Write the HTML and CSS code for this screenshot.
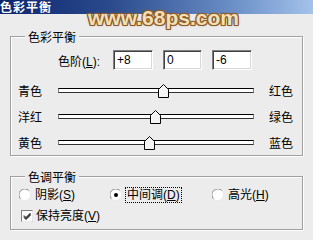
FILE: index.html
```html
<!DOCTYPE html>
<html lang="zh">
<head>
<meta charset="utf-8">
<title>色彩平衡</title>
<link rel="stylesheet" href="styles.css">
</head>
<body>
<div class="dialog">
  <div class="titlebar"><span class="title">色彩平衡</span></div>
  <div class="watermark">www.68ps.com</div>
  <div class="content">
    <fieldset class="group group-balance">
      <legend>色彩平衡</legend>
      <div class="levels">
        <span class="levels-label">色阶(<u>L</u>):</span>
        <div class="field">+8</div>
        <div class="field field-mid">0</div>
        <div class="field">-6</div>
      </div>
      <div class="slider-row">
        <span class="side-label">青色</span>
        <div class="track"><svg class="thumb" style="--v:8" width="11" height="14" viewBox="0 0 11 14"><polygon points="0.5,5.5 5.5,0.5 10.5,5.5 10.5,13.5 0.5,13.5" fill="#f4f4f4" stroke="#000"/><polyline points="1.5,12.5 1.5,5.9 5.5,1.9" fill="none" stroke="#fff"/></svg></div>
        <span class="side-label side-right">红色</span>
      </div>
      <div class="slider-row">
        <span class="side-label">洋红</span>
        <div class="track"><svg class="thumb" style="--v:0" width="11" height="14" viewBox="0 0 11 14"><polygon points="0.5,5.5 5.5,0.5 10.5,5.5 10.5,13.5 0.5,13.5" fill="#f4f4f4" stroke="#000"/><polyline points="1.5,12.5 1.5,5.9 5.5,1.9" fill="none" stroke="#fff"/></svg></div>
        <span class="side-label side-right">绿色</span>
      </div>
      <div class="slider-row">
        <span class="side-label">黄色</span>
        <div class="track"><svg class="thumb" style="--v:-6" width="11" height="14" viewBox="0 0 11 14"><polygon points="0.5,5.5 5.5,0.5 10.5,5.5 10.5,13.5 0.5,13.5" fill="#f4f4f4" stroke="#000"/><polyline points="1.5,12.5 1.5,5.9 5.5,1.9" fill="none" stroke="#fff"/></svg></div>
        <span class="side-label side-right">蓝色</span>
      </div>
    </fieldset>

    <fieldset class="group group-tone">
      <legend>色调平衡</legend>
      <div class="radio-row">
        <label class="option option-1">
          <svg class="radio" width="12" height="12" viewBox="0 0 12 12"><circle cx="6" cy="6" r="5.5" fill="#fff"/><path d="M1.6 9.9 A5.5 5.5 0 0 1 9.9 1.6" fill="none" stroke="#8a8a8a"/><path d="M9.9 1.6 A5.5 5.5 0 0 1 1.6 9.9" fill="none" stroke="#e8e8e8"/></svg>
          <span>阴影(<u>S</u>)</span>
        </label>
        <label class="option option-2">
          <svg class="radio" width="12" height="12" viewBox="0 0 12 12"><circle cx="6" cy="6" r="5.5" fill="#fff"/><path d="M1.6 9.9 A5.5 5.5 0 0 1 9.9 1.6" fill="none" stroke="#8a8a8a"/><path d="M9.9 1.6 A5.5 5.5 0 0 1 1.6 9.9" fill="none" stroke="#e8e8e8"/><circle cx="6" cy="6" r="2" fill="#000"/></svg>
          <span class="focus">中间调(<u>D</u>)</span>
        </label>
        <label class="option">
          <svg class="radio" width="12" height="12" viewBox="0 0 12 12"><circle cx="6" cy="6" r="5.5" fill="#fff"/><path d="M1.6 9.9 A5.5 5.5 0 0 1 9.9 1.6" fill="none" stroke="#8a8a8a"/><path d="M9.9 1.6 A5.5 5.5 0 0 1 1.6 9.9" fill="none" stroke="#e8e8e8"/></svg>
          <span>高光(<u>H</u>)</span>
        </label>
      </div>
      <label class="check-row">
        <svg class="checkbox" width="12" height="12" viewBox="0 0 12 12"><rect x="0.5" y="0.5" width="11" height="11" fill="#fff" stroke="#808080"/><path d="M11.5 0.5 V11.5 H0.5" fill="none" stroke="#e8e8e8"/><path d="M3 5.5 L5 7.5 L9.5 3 M3 6.5 L5 8.5 L9.5 4 M3 7.5 L5 9.5 L9.5 5" fill="none" stroke="#000"/></svg>
        <span>保持亮度(<u>V</u>)</span>
      </label>
    </fieldset>
  </div>
</div>
</body>
</html>
```

FILE: styles.css
```css
* { box-sizing: border-box; }

html, body {
  margin: 0;
  padding: 0;
  background: #ececec;
}

body {
  width: 313px;
  height: 240px;
  overflow: hidden;
  font-family: "Liberation Sans", "Noto Sans CJK SC", sans-serif;
  font-size: 12px;
  color: #000;
}

.dialog {
  position: relative;
  width: 313px;
  height: 240px;
}

.titlebar {
  height: 14px;
  background: linear-gradient(to right, #0e246e 0%, #2a4a8c 35%, #6c90c8 75%, #a4c2ea 100%);
  display: flex;
  align-items: center;
}

.title {
  color: #fff;
  font-family: "Noto Sans CJK SC", sans-serif;
  font-weight: bold;
  font-size: 12px;
  line-height: 14px;
  letter-spacing: 1px;
}

.watermark {
  position: absolute;
  left: 88px;
  top: 7px;
  font-family: "Liberation Sans", sans-serif;
  font-weight: bold;
  font-size: 21px;
  line-height: 21px;
  color: #f3e0b6;
  text-shadow:
    1px 0 0 #8a5a2c, -1px 0 0 #8a5a2c, 0 1px 0 #8a5a2c, 0 -1px 0 #8a5a2c,
    1px 1px 0 #8a5a2c, -1px -1px 0 #8a5a2c, 1px -1px 0 #8a5a2c, -1px 1px 0 #8a5a2c,
    0 0 3px #a0703c;
}

.content {
  padding: 16px 10px 0 10px;
}

.group {
  margin: 0;
  padding: 0;
  min-width: 0;
  border: 1px solid #a0a0a0;
  box-shadow: inset 1px 1px 0 #fff, 1px 1px 0 #fff;
}

.group legend {
  margin-left: 14px;
  padding: 0 3px;
  font-family: "Noto Sans CJK SC", sans-serif;
  font-size: 12px;
  line-height: 13px;
  background: #ececec;
}

.levels {
  display: flex;
  align-items: center;
  margin: 7px 0 0 47px;
  height: 20px;
}

.levels-label {
  width: 55px;
  flex: none;
}

.field {
  flex: none;
  width: 40px;
  height: 20px;
  margin-right: 10px;
  background: #fff;
  border-top: 1px solid #808080;
  border-left: 1px solid #808080;
  border-right: 1px solid #fff;
  border-bottom: 1px solid #fff;
  box-shadow: inset 1px 1px 0 #404040, inset -1px -1px 0 #d8d8d8;
  padding: 2px 0 0 3px;
  line-height: 15px;
  font-size: 12px;
}

.field-mid { width: 39px; }

.slider-row {
  display: flex;
  align-items: center;
  height: 26px;
  padding-left: 7px;
}

.levels + .slider-row { margin-top: 7px; }

.side-label {
  flex: none;
  width: 40px;
  font-family: "Noto Sans CJK SC", sans-serif;
}

.side-right {
  width: auto;
  margin-left: 15px;
}

.track {
  flex: none;
  position: relative;
  width: 196px;
  height: 5px;
  background: #fff;
  border-top: 1px solid #000;
  border-bottom: 1px solid #303030;
  border-left: 1px solid #808080;
  border-right: 1px solid #808080;
}

.thumb {
  position: absolute;
  top: -5px;
  left: calc(50% - 6.5px + var(--v) * 1px);
}

.group-tone {
  margin-top: 14px;
  padding-bottom: 6px;
}

.radio-row {
  display: flex;
  align-items: center;
  height: 14px;
  margin-top: 5px;
  padding-left: 8px;
}

.option {
  display: flex;
  align-items: center;
  gap: 4px;
}

.option-1 { width: 91px; }
.option-2 { width: 102px; }

.radio, .checkbox { flex: none; display: block; }

.option span, .check-row span {
  font-family: "Liberation Sans", "Noto Sans CJK SC", sans-serif;
  line-height: 14px;
}

.focus {
  outline: 1px dotted #000;
  outline-offset: 0;
  padding: 0 1px;
}

.check-row {
  display: flex;
  align-items: center;
  gap: 3px;
  height: 14px;
  margin-top: 7px;
  padding-left: 10px;
}

u { text-decoration: underline; }
```
